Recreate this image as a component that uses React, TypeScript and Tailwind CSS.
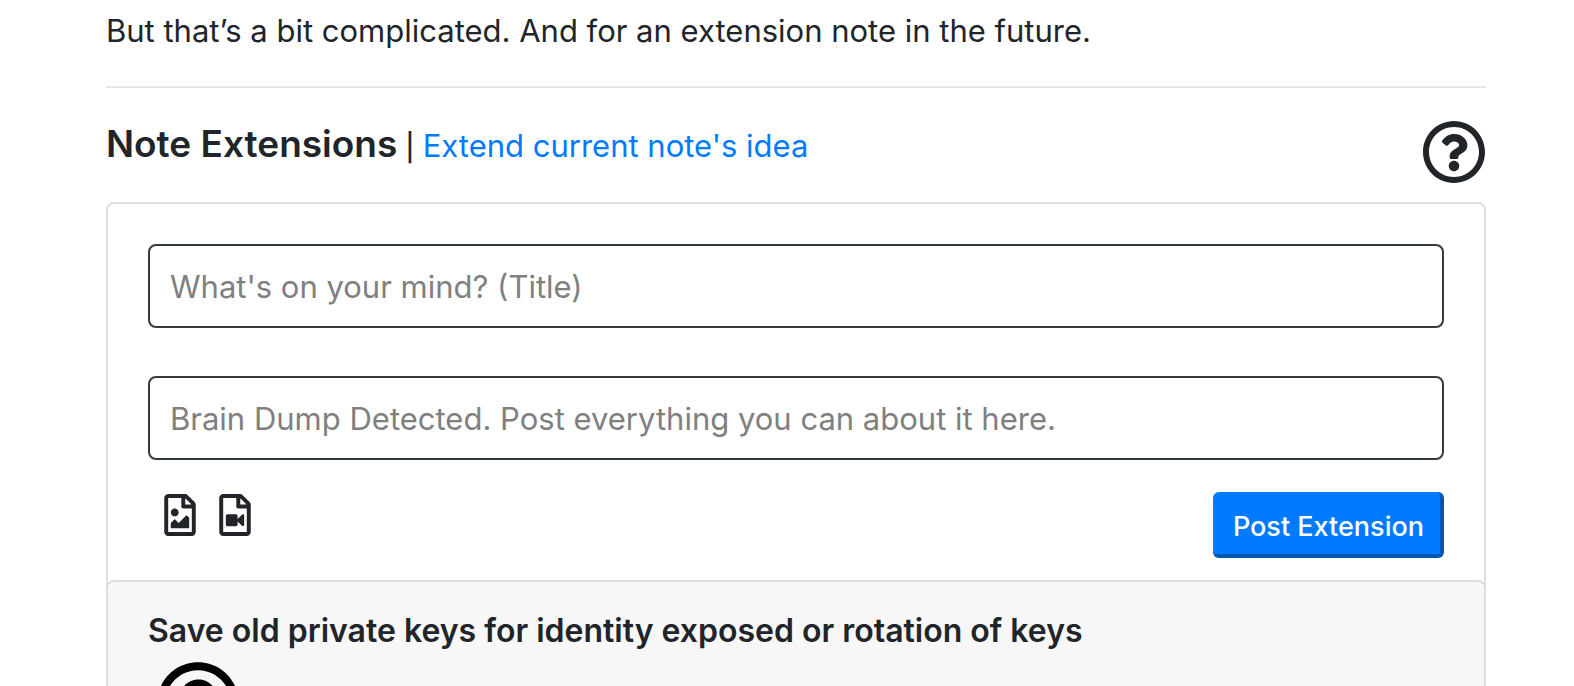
import { FaRegFileImage, FaRegFileVideo, FaRegQuestionCircle } from "react-icons/fa";

function NoteForm() {
  return (
    <form className="px-10 pt-10 pb-[22px]" onSubmit={(event) => event.preventDefault()}>
      <input
        type="text"
        aria-label="Note title"
        placeholder="What's on your mind? (Title)"
        className="block h-[84px] w-full rounded-lg border-2 border-[#343a40] bg-white px-5 text-[31px] placeholder:text-[#808080]"
      />
      <input
        type="text"
        aria-label="Note body"
        placeholder="Brain Dump Detected. Post everything you can about it here."
        className="mt-12 block h-[84px] w-full rounded-lg border-2 border-[#343a40] bg-white px-5 text-[31px] placeholder:text-[#808080]"
      />
      <div className="mt-8 flex items-start justify-between">
        <div className="flex gap-[23px] pt-0.5 pl-4">
          <button type="button" aria-label="Attach image">
            <FaRegFileImage className="h-[42px] w-8" />
          </button>
          <button type="button" aria-label="Attach video">
            <FaRegFileVideo className="h-[42px] w-8" />
          </button>
        </div>
        <button
          type="submit"
          className="h-[66px] rounded-md border-r-4 border-b-4 border-[#0056b3] bg-[#007bff] pt-2 pr-4 pl-5 text-[27px] font-medium text-white"
        >
          Post Extension
        </button>
      </div>
    </form>
  );
}

function ExtensionCard() {
  return (
    <article className="-mx-0.5 rounded-t-lg border-2 border-b-0 border-[#dfdfdf] bg-[#f7f7f7] px-10 pt-[25px] pb-8">
      <h3 className="text-[32px] leading-[48px] font-semibold">
        Save old private keys for identity exposed or rotation of keys
      </h3>
      <FaRegQuestionCircle className="mt-1.5 ml-2 size-[84px] text-black" />
    </article>
  );
}

export default function App() {
  return (
    <main className="h-screen overflow-hidden bg-white pr-[88px] pl-[106px] font-['Inter',sans-serif] text-[#212529]">
      <p className="pt-[7px] text-[31px] leading-[48px]">
        But that’s a bit complicated. And for an extension note in the future.
      </p>
      <hr className="mt-[31px] border-t-2 border-[#e5e5e5]" />
      <div className="mt-8 flex items-start justify-between">
        <div className="flex items-baseline gap-2 text-[31px] leading-[48px]">
          <h2 className="text-[37px] font-semibold">Note Extensions</h2>
          <span className="text-[27px] font-medium">|</span>
          <a href="#extend" className="text-[#007bff]">
            Extend current note's idea
          </a>
        </div>
        <button type="button" aria-label="Help">
          <FaRegQuestionCircle className="size-16" />
        </button>
      </div>
      <section className="mt-[18px] rounded-t-lg border-2 border-b-0 border-[#dfdfdf]">
        <NoteForm />
        <ExtensionCard />
      </section>
    </main>
  );
}
